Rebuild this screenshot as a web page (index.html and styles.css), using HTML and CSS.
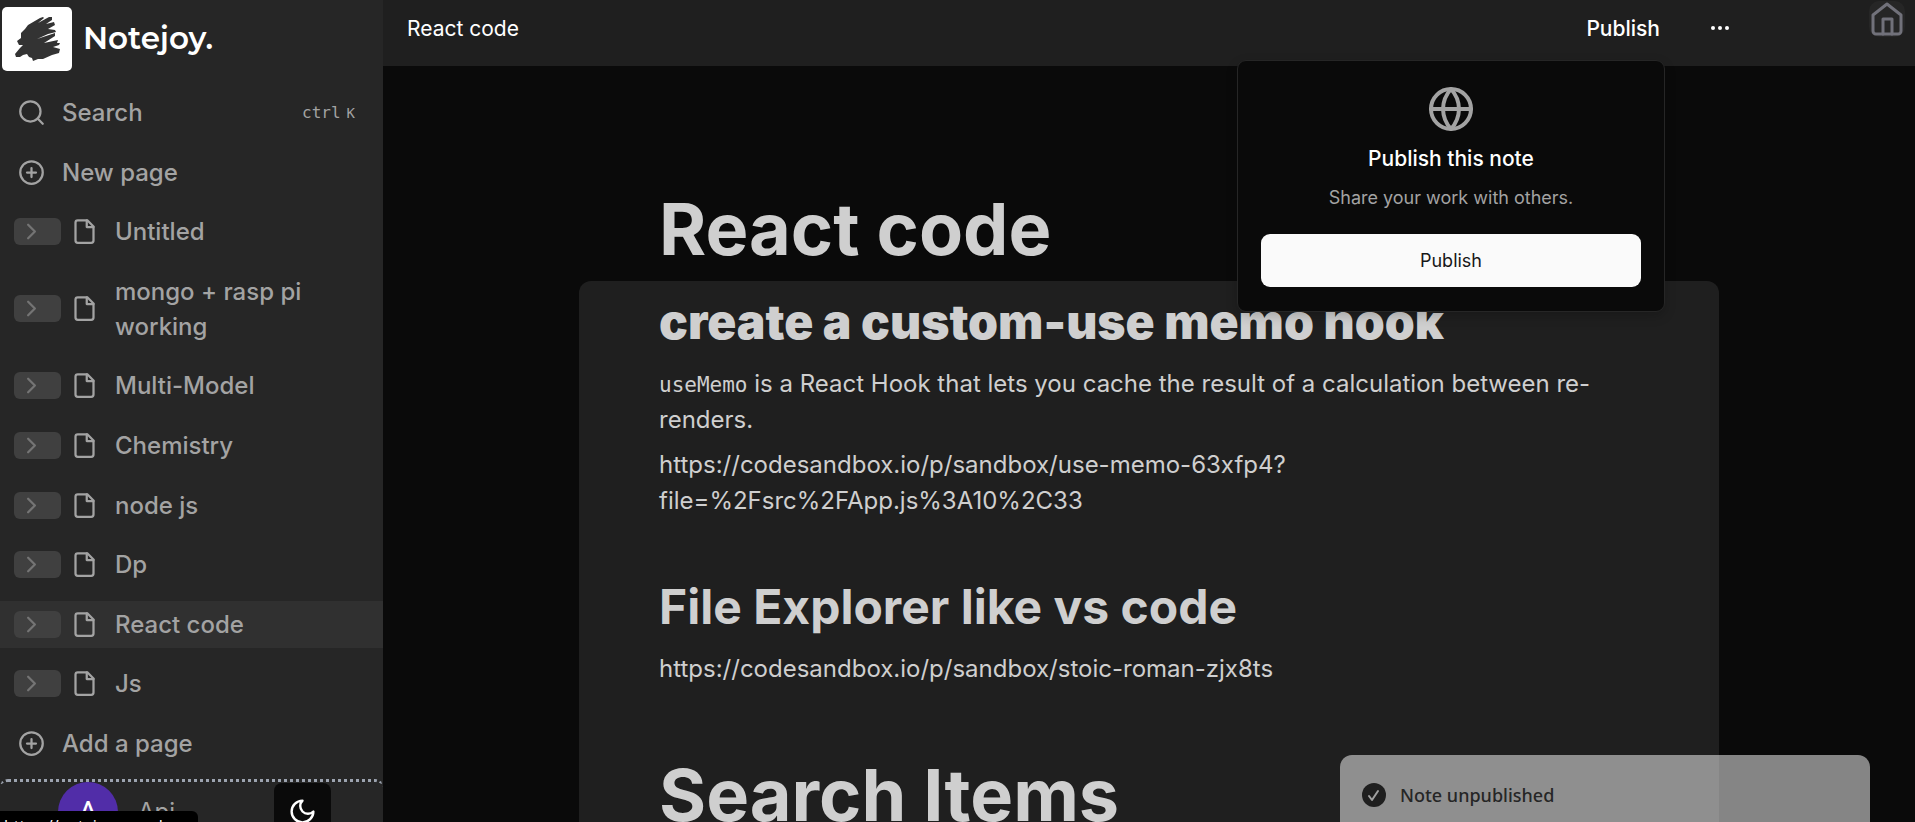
FILE: index.html
```html
<!DOCTYPE html>
<html lang="en">
<head>
<meta charset="utf-8">
<title>React code</title>
<link rel="stylesheet" href="styles.css">
</head>
<body>
<svg class="sprite" aria-hidden="true">
  <symbol id="chevron" viewBox="0 0 24 24"><path d="m9 18 6-6-6-6"/></symbol>
  <symbol id="file" viewBox="0 0 24 24"><path d="M14.500 2H6a2 2 0 0 0-2 2v16a2 2 0 0 0 2 2h12a2 2 0 0 0 2-2V7.500L14.500 2z"/><path d="M14 2v6h6"/></symbol>
  <symbol id="plus" viewBox="0 0 24 24"><circle cx="12" cy="12" r="10"/><path d="M8 12h8M12 8v8"/></symbol>
</svg>
<div class="app">
  <aside class="sidebar">
    <div class="brand">
      <svg class="logo" viewBox="0 0 70 64" aria-hidden="true"><path d="M38 11 41 10 42 11 36 16 47 10 50 10 50 13 44 17 52 15 53 18 46 22 53 23 54 25 46 27 35 32 44 29 53 26 53 29 42 36 56 33 55 36 58 36 57 38 51 40 58 42 57 46 50 48 41 52 36 52 31 54 30 51 27 50 25 47 21 48 18 50 14 50 13 47 18 41 21 38 17 38 15 34 19 31 19 26 23 22 26 18Z"/></svg>
      <span class="wordmark">Notejoy.</span>
    </div>
    <nav class="nav">
      <button class="row action"><svg class="icon" viewBox="0 0 24 24"><circle cx="11" cy="11" r="9"/><path d="m22 22-4.600-4.600"/></svg><span>Search</span><kbd class="keys"><span>ctrl</span> <small>K</small></kbd></button>
      <button class="row action"><svg class="icon"><use href="#plus"/></svg><span>New page</span></button>
      <div class="row"><button class="expand" aria-label="Expand"><svg class="icon"><use href="#chevron"/></svg></button><svg class="icon"><use href="#file"/></svg><a href="#">Untitled</a></div>
      <div class="row"><button class="expand" aria-label="Expand"><svg class="icon"><use href="#chevron"/></svg></button><svg class="icon"><use href="#file"/></svg><a href="#">mongo + rasp pi working</a></div>
      <div class="row"><button class="expand" aria-label="Expand"><svg class="icon"><use href="#chevron"/></svg></button><svg class="icon"><use href="#file"/></svg><a href="#">Multi-Model</a></div>
      <div class="row"><button class="expand" aria-label="Expand"><svg class="icon"><use href="#chevron"/></svg></button><svg class="icon"><use href="#file"/></svg><a href="#">Chemistry</a></div>
      <div class="row"><button class="expand" aria-label="Expand"><svg class="icon"><use href="#chevron"/></svg></button><svg class="icon"><use href="#file"/></svg><a href="#">node js</a></div>
      <div class="row"><button class="expand" aria-label="Expand"><svg class="icon"><use href="#chevron"/></svg></button><svg class="icon"><use href="#file"/></svg><a href="#">Dp</a></div>
      <div class="row active"><button class="expand" aria-label="Expand"><svg class="icon"><use href="#chevron"/></svg></button><svg class="icon"><use href="#file"/></svg><a href="#">React code</a></div>
      <div class="row"><button class="expand" aria-label="Expand"><svg class="icon"><use href="#chevron"/></svg></button><svg class="icon"><use href="#file"/></svg><a href="#">Js</a></div>
      <button class="row action"><svg class="icon"><use href="#plus"/></svg><span>Add a page</span></button>
    </nav>
    <footer class="user">
      <span class="avatar">A</span>
      <span class="name">Api</span>
      <button class="theme" aria-label="Dark mode"><svg class="icon" viewBox="0 0 24 24"><path d="M12 3a6 6 0 0 0 9 9 9 9 0 1 1-9-9Z"/></svg></button>
    </footer>
  </aside>
  <main class="main">
    <header class="topbar">
      <button class="crumb">React code</button>
      <div class="tools">
        <button class="publish">Publish</button>
        <button class="more" aria-label="More"><svg class="dots" viewBox="0 0 24 24"><circle cx="5" cy="12" r="2"/><circle cx="12" cy="12" r="2"/><circle cx="19" cy="12" r="2"/></svg></button>
      </div>
    </header>
    <article class="note">
      <h1 class="title">React code</h1>
      <div class="editor">
        <h2 class="heading heavy">create a custom-use memo hook</h2>
        <p><code>useMemo</code> is a React Hook that lets you cache the result of a calculation between re-renders.</p>
        <p>https://codesandbox.io/p/sandbox/use-memo-63xfp4?<br>file=%2Fsrc%2FApp.js%3A10%2C33</p>
        <h2 class="heading spaced">File Explorer like vs code</h2>
        <p>https://codesandbox.io/p/sandbox/stoic-roman-zjx8ts</p>
        <h2 class="big">Search Items</h2>
      </div>
    </article>
  </main>
</div>
<a class="home" href="#" aria-label="Home"><svg viewBox="0 0 36 36"><path d="M4 14 18 3l14 11v16a3 3 0 0 1-3 3H7a3 3 0 0 1-3-3Z"/><path d="M14 33V18h9v15"/></svg></a>
<section class="popover" aria-label="Publish">
  <svg class="globe" viewBox="0 0 24 24"><circle cx="12" cy="12" r="10"/><path d="M12 2a15.300 15.300 0 0 1 4 10 15.300 15.300 0 0 1-4 10 15.300 15.300 0 0 1-4-10 15.300 15.300 0 0 1 4-10zM2 12h20"/></svg>
  <p class="pop-title">Publish this note</p>
  <p class="pop-text">Share your work with others.</p>
  <button class="pop-button">Publish</button>
</section>
<div class="toast" role="status"><svg class="check" viewBox="0 0 24 24"><circle cx="12" cy="12" r="12"/><path d="m7 13 3 4 6-9"/></svg><span>Note unpublished</span></div>
<div class="statusbar">https://notejoy.vercel.app</div>
</body>
</html>
```

FILE: styles.css
```css
* { box-sizing: border-box; }
body { margin: 0; background: #0a0a0a; color: #cfcfcf; font-family: Inter, sans-serif; overflow: hidden; }
button { border: 0; padding: 0; background: none; color: inherit; font: inherit; cursor: pointer; }
a { color: inherit; text-decoration: none; }
h1, h2, p { margin: 0; }
svg { fill: none; stroke: currentColor; stroke-width: 2; stroke-linecap: round; stroke-linejoin: round; }
.sprite { display: none; }
.app { display: flex; height: 100vh; }

.sidebar { flex: 0 0 20%; display: flex; flex-direction: column; background: #262626; color: #a3a3a3; overflow: hidden; }
.brand { display: flex; align-items: center; gap: 11px; padding: 7px 2px; margin-bottom: 11px; }
.logo { width: 70px; height: 64px; border-radius: 5px; background: #fff; fill: #333; stroke: none; }
.wordmark { color: #fff; padding-bottom: 2px; font: 600 31px/40px Montserrat, Lato, sans-serif; }
.nav { flex: 1; display: flex; flex-direction: column; justify-content: space-between; padding-bottom: 12px; }
.row { display: flex; align-items: center; min-height: 47px; padding: 6px 20px 6px 14px; font-size: 24px; font-weight: 500; line-height: 35px; text-align: left; }
.row .icon { flex: none; width: 27px; height: 27px; }
.row a { margin-left: 17px; }
.action { padding-left: 18px; }
.action > span { margin-left: 17px; }
.active { background: #303030; }
.expand { flex: none; display: flex; align-items: center; width: 47px; height: 27px; margin-right: 10px; padding-left: 4px; border-radius: 6px; background: #404040; color: #747474; }
.keys { display: flex; align-items: baseline; gap: 6px; margin-left: auto; padding-right: 8px; font: 16px/24px "DejaVu Sans Mono", monospace; }
.keys small { font-size: 14px; }
.user { flex: 0 0 43px; min-height: 0; display: flex; align-items: flex-start; border-top: 3px dotted #9ca3af; border-radius: 8px; padding-left: 58px; }
.avatar { width: 60px; height: 60px; border-radius: 50%; background: #512da8; color: #fff; font: 30px/60px Roboto, sans-serif; text-align: center; flex: none; }
.name { margin-left: 20px; font-size: 24px; line-height: 60px; }
.theme { display: grid; place-items: center; width: 57px; height: 57px; margin: 1px 52px 0 auto; border-radius: 8px; background: #0a0a0a; color: #fff; flex: none; }
.theme .icon { width: 29px; height: 29px; }

.main { flex: 1; min-width: 0; display: flex; flex-direction: column; overflow: hidden; }
.topbar { flex: 0 0 66px; display: flex; align-items: center; justify-content: space-between; padding: 0 183px 10px 24px; background: #1f1f1f; color: #fff; font-size: 21px; font-weight: 500; }
.crumb { font-weight: 400; }
.tools { display: flex; align-items: center; gap: 48px; }
.more { display: grid; }
.dots { width: 24px; height: 24px; fill: currentColor; stroke: none; }
.note { width: 1140px; max-width: 100%; margin: 0 auto; padding-top: 119px; }
.title { padding: 0 80px; font-size: 72px; line-height: 88px; font-weight: 700; }
.editor { margin-top: 8px; padding: 15px 80px 60px; border-radius: 12px; background: #1f1f1f; font-size: 24px; line-height: 36px; }
.editor p { margin-bottom: 9px; }
.editor code { font: 21px/30px "DejaVu Sans Mono", monospace; }
.heading { margin-bottom: 18px; font-size: 48px; line-height: 52px; font-weight: 700; }
.heavy { font-weight: 900; }
.spaced { margin-top: 62px; }
.big { margin-top: 60px; font-size: 72px; line-height: 96px; }

.home { position: absolute; top: 1px; right: 10px; width: 36px; height: 36px; border-radius: 10px; background: #262626; color: #71717a; }
.home svg { display: block; stroke-width: 3; }
.popover { position: absolute; top: 60px; right: 250px; width: 428px; display: flex; flex-direction: column; align-items: center; padding: 24px 23px; border: 1px solid #262626; border-radius: 9px; background: #0a0a0a; color: #fff; box-shadow: 0 4px 12px #0003; }
.globe { width: 48px; height: 48px; color: #a3a3a3; }
.pop-title { margin-top: 11px; font-size: 21px; line-height: 30px; font-weight: 500; }
.pop-text { margin: 12px 0 24px; color: #a3a3a3; font-size: 18px; line-height: 24px; }
.pop-button { width: 100%; height: 53px; border-radius: 9px; background: #fafafa; color: #171717; font-size: 18px; }
.toast { position: absolute; right: 45px; bottom: -13px; display: flex; align-items: center; gap: 14px; width: 530px; height: 80px; padding: 0 22px; border-radius: 12px; background: #ffffff80; color: #262626; font: 500 18px/30px "Noto Sans", sans-serif; }
.check { width: 24px; height: 24px; fill: #1f1f1f; stroke: none; }
.check path { fill: none; stroke: #a0a0a0; stroke-width: 2; }
.statusbar { position: absolute; left: 0; bottom: -13px; width: 198px; height: 24px; padding-left: 4px; border-top-right-radius: 6px; background: #000; color: #fff; font: 16px/30px "Open Sans", sans-serif; overflow: hidden; white-space: nowrap; }
```
